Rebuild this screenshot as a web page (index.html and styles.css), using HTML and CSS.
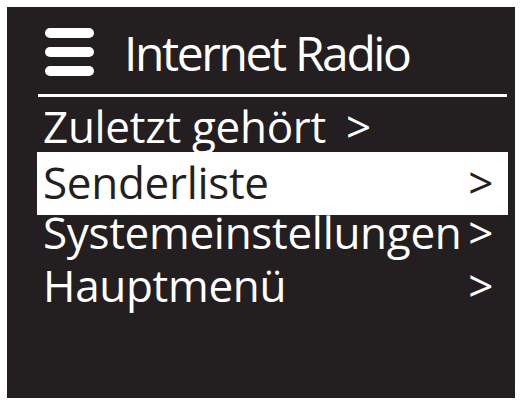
FILE: index.html
```html
<!DOCTYPE html>
<html lang="de">
  <head>
    <meta charset="UTF-8" />
    <meta name="viewport" content="width=device-width, initial-scale=1.0" />
    <title>Internet Radio</title>
    <link rel="stylesheet" href="styles.css">
  </head>
  <body>
    <div class="screen">
      <div class="header">
        <svg class="menu-icon" width="50" height="50" viewBox="0 0 50 50">
          <line x1="5" y1="5" x2="44" y2="5" />
          <line x1="5" y1="24" x2="44" y2="24" />
          <line x1="5" y1="43" x2="44" y2="43" />
        </svg>
        <span class="title">Internet Radio</span>
      </div>
      <div class="divider"></div>
      <ul class="menu">
        <li class="row row-inline"><span>Zuletzt gehört</span><span class="arrow">&gt;</span></li>
        <li class="row selected"><span>Senderliste</span><span class="arrow">&gt;</span></li>
        <li class="row row-short"><span>Systemeinstellungen</span><span class="arrow">&gt;</span></li>
        <li class="row row-tall"><span>Hauptmenü</span><span class="arrow">&gt;</span></li>
      </ul>
    </div>
  </body>
</html>
```

FILE: styles.css
```css
body {
  margin: 0;
  background: #fff;
  font-family: "Open Sans", "Noto Sans", sans-serif;
  color: #fff;
}
.screen {
  margin: 7px 0 0 7px;
  width: 508px;
  height: 391px;
  background: #231f20;
  box-sizing: border-box;
  padding-top: 16px;
}
.header {
  display: flex;
  align-items: center;
  padding-left: 38px;
  height: 60px;
}
.menu-icon {
  stroke: #fff;
  stroke-width: 10;
  stroke-linecap: round;
  flex: none;
}
.title {
  font-size: 48px;
  line-height: 60px;
  margin-left: 29px;
  letter-spacing: -2.4px;
}
.divider {
  height: 3px;
  background: #fff;
  margin: 11px 8px 0 31px;
}
.menu {
  list-style: none;
  margin: 3px 7px 0 30px;
  padding: 0;
}
.row {
  display: flex;
  justify-content: space-between;
  font-size: 44px;
  letter-spacing: -0.3px;
  line-height: 52px;
  height: 52px;
  padding: 0 15px 0 6px;
}
.row-inline {
  justify-content: flex-start;
}
.row-inline .arrow {
  margin-left: 20px;
}
.selected {
  background: #fff;
  color: #231f20;
  height: 63px;
  line-height: 53px;
  box-sizing: border-box;
  padding-top: 4px;
}
.row-short {
  height: 34px;
  line-height: 34px;
}
.row-tall {
  height: 72px;
  line-height: 72px;
}
```
